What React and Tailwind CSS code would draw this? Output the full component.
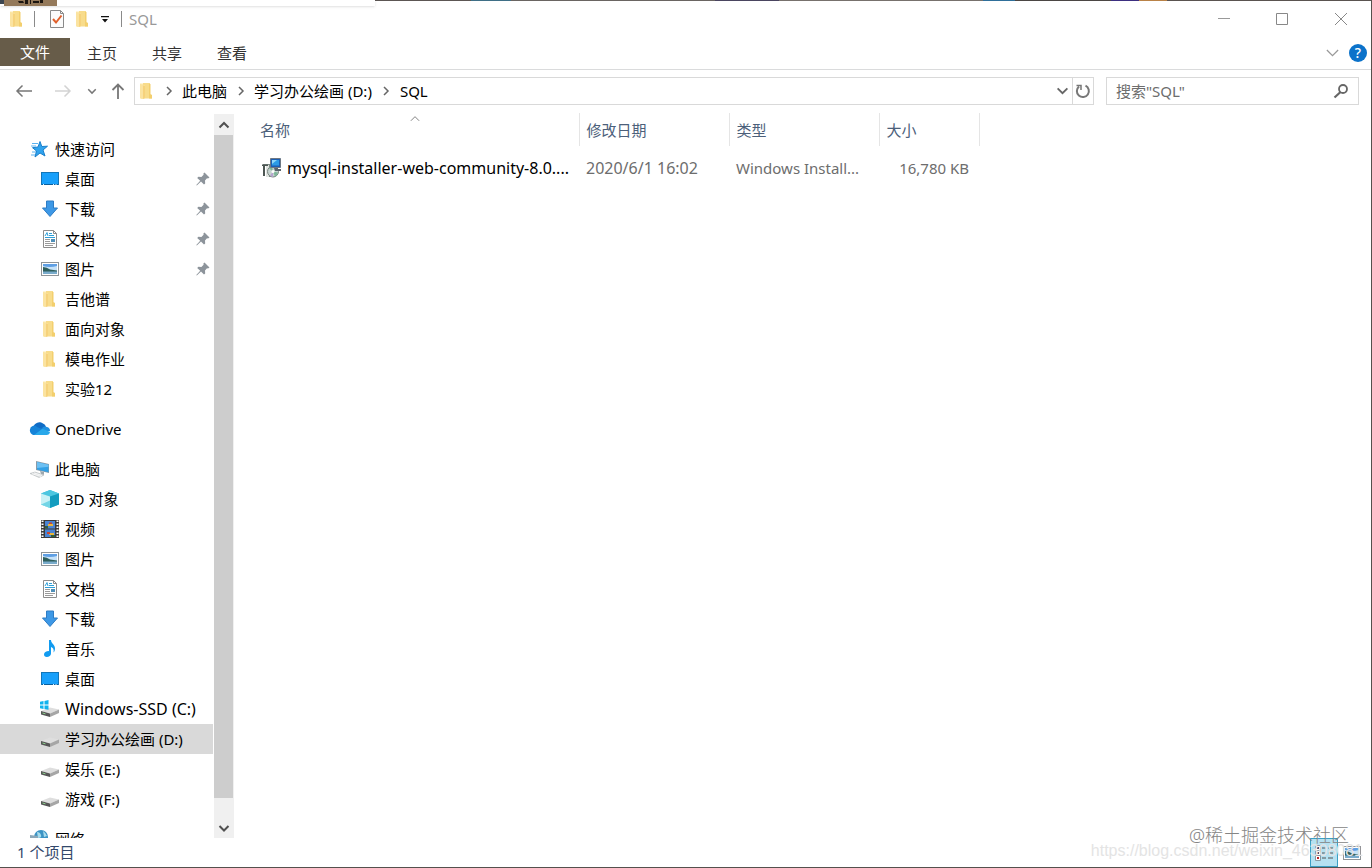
import React from "react";

function FolderIcon() {
  return (
    <svg width="20" height="20" viewBox="0 0 20 20" aria-hidden="true">
      <path d="M3 2.500h4l1 1v14l-4 .5-1-1z" fill="#fdeab0" />
      <path d="M6 2h7v11l2 1v3.500H6z" fill="#f8dc8b" />
      <path d="M12 3h1.500v10.500L15 14v3.500h-3z" fill="#f3cf6e" />
      <path d="m3 3 5 1.500v12L6 18l-3-1z" fill="#fbe3a0" />
      <path d="M8 5v11.500L6 18V4.400z" fill="#f6d27c" />
    </svg>
  );
}

function DesktopIcon() {
  return (
    <svg width="20" height="20" viewBox="0 0 20 20" aria-hidden="true">
      <rect x="1.500" y="3.500" width="17" height="12" fill="#18a0fb" stroke="#1376b8" />
      <path d="M2 15.500h16" stroke="#0b5f9c" />
      <path d="M3 15.500h1M13 15.500h1M15.500 15.500h1" stroke="#d7efff" />
    </svg>
  );
}

function DownloadIcon() {
  return (
    <svg width="20" height="20" viewBox="0 0 20 20" aria-hidden="true">
      <path d="M6.500 2h7v7h4L10 17.500 2.500 9h4z" fill="#3d98e6" stroke="#2f7cc4" />
    </svg>
  );
}

function DocumentIcon() {
  return (
    <svg width="20" height="20" viewBox="0 0 20 20" aria-hidden="true">
      <path d="M3.500 1.500h10l3 3v14h-13z" fill="#fff" stroke="#8c8c8c" />
      <path d="M13.500 1.500v3h3" fill="none" stroke="#8c8c8c" />
      <path d="m5 7 2-3.500L8 7M9 4.500h3M9 6.500h5M5 8.500h10" stroke="#2e9fd8" fill="none" />
      <path d="M5 10.500h5M5 12.500h5M5 14.500h10M5 16.500h8" stroke="#9a9a9a" />
      <path d="M11 10h4v3h-4z" fill="#4f8fb8" />
    </svg>
  );
}

function PictureIcon() {
  return (
    <svg width="20" height="20" viewBox="0 0 20 20" aria-hidden="true">
      <rect x="1.500" y="3.500" width="17" height="13" fill="#fff" stroke="#8f9498" />
      <path d="M3 5h14v10H3z" fill="#c6e2f8" />
      <path d="M3 5h14v2q-7 2-14 0z" fill="#5f9fe4" />
      <path d="M3 8q4 0 7 2.500l7 1V13H3z" fill="#2f5f5c" />
      <path d="M3 12.500h14V15H3z" fill="#7aaccc" />
    </svg>
  );
}

function StarIcon() {
  return (
    <svg width="20" height="20" viewBox="0 0 20 20" aria-hidden="true">
      <path
        d="m11 2.500 1.800 5 5.700-.3-4.500 3.800 2 6-5-3-5 4 1.500-6-4-3.300 5.500-.7z"
        fill="#2fa3ee"
        stroke="#1a7fcb"
      />
      <path d="M3 4.500h6M2 7h5M3 13h4M2 16h4" stroke="#5bb2f0" />
    </svg>
  );
}

function CloudIcon() {
  return (
    <svg width="22" height="20" viewBox="0 0 22 20" aria-hidden="true">
      <path d="M5 16a4.500 4.500 0 0 1-.5-8A6 6 0 0 1 14 4.500 5 5 0 0 1 17 8l-3 6z" fill="#0f6cc6" />
      <path d="M13.500 8.500a4.500 4.500 0 0 1 4.500-.5 4 4 0 0 1 3 4l-8 1z" fill="#1f90e0" />
      <path d="m4 15.500 9-6 8 3.500a3.500 3.500 0 0 1-3.500 3H5z" fill="#28a8ea" />
      <path d="M1 10.500A4 4 0 0 1 8 8l5 2-8 6a4.500 4.500 0 0 1-4-5.500z" fill="#1683d8" />
    </svg>
  );
}

function ComputerIcon() {
  return (
    <svg width="22" height="20" viewBox="0 0 22 20" aria-hidden="true">
      <path d="m7 2 13 3v9L7 11z" fill="#8a9aa6" />
      <path d="m8 3 11.500 2.700v7.500L8 10.500z" fill="#33a1e6" />
      <path d="m8 3 11.500 2.700v2L8 9z" fill="#6cc0f3" />
      <path d="m11 12 4 1v3l-3-1z" fill="#9ca7ae" />
      <path d="m1 14.500 5-1.500 9 3-5 2.500z" fill="#d9dcde" stroke="#b3b8bb" strokeWidth=".6" />
      <path d="m3 14.700 9 2.700M5 13.900l8 2.600" stroke="#f7f7f7" />
    </svg>
  );
}

function CubeIcon() {
  return (
    <svg width="20" height="20" viewBox="0 0 20 20" aria-hidden="true">
      <path d="m10 1 9 3.500v11L10 19l-9-3.500v-11z" fill="#35bcd8" />
      <path d="m10 1 9 3.500-9 3-9-3z" fill="#4cc6e0" />
      <path d="m1 4.500 9 3V19l-9-3.500z" fill="#c8f1f6" />
      <path d="m10 7.500 9-3v11L10 19z" fill="#139cbf" />
      <path d="m1 15.500 9-4V19z" fill="#72d5e6" />
    </svg>
  );
}

function VideoIcon() {
  return (
    <svg width="20" height="20" viewBox="0 0 20 20" aria-hidden="true">
      <path d="M1 1h18v18H1z" fill="#3a3a3a" />
      <path d="M2.500 1.500v17M17.500 1.500v17" stroke="#fff" strokeWidth="2" strokeDasharray="1.500 1.500" />
      <path d="M5 2h10v7.500H5zM5 10.500h10V18H5z" fill="#4a84d4" />
      <path d="M8 5h5v2H8zM9 14h5v2H9z" fill="#e9b53a" />
      <path d="M9 3.500h3V5H9zM7 13h3v2H7z" fill="#c8452f" />
      <path d="M5 7h3v2.500H5zM11 16h4v2h-4z" fill="#2f5d3c" />
    </svg>
  );
}

function MusicIcon() {
  return (
    <svg width="20" height="20" viewBox="0 0 20 20" aria-hidden="true">
      <path
        d="M9 1h2c0 3.500 4 4.500 4 8.500 0 1.500-.5 3-1.500 4 .8-3-.5-5-2.500-5.500v6.500c0 2-2 3.500-4.200 3.500C5 18 4 17 4 15.500 4 13.500 6 12 9 12z"
        fill="#119bf0"
      />
    </svg>
  );
}

function DriveIcon({ system }) {
  return (
    <svg width="20" height="20" viewBox="0 0 20 20" aria-hidden="true">
      <path d="m1 12 9-3.500 9 2-9 4z" fill="#dedede" />
      <path d="m1 12 9 2.500V18l-9-2.500z" fill="#555" />
      <path d="m10 14.500 9-4v3.500l-9 4z" fill="#a6a6a6" />
      <path d="m2.500 14 3 .8" stroke="#8fd08f" />
      {system && (
        <path d="M0 2.700 3.500 2v3.500H0zM4.500 2 8.500 1v4.500h-4zM0 6.500h3.500V10L0 9.300zM4.500 6.500h4v4.300l-4-.8z" fill="#10b3ee" />
      )}
    </svg>
  );
}

function NetworkIcon() {
  return (
    <svg width="20" height="20" viewBox="0 0 20 20" aria-hidden="true">
      <circle cx="12" cy="8" r="7" fill="#3b93c4" />
      <path d="M8 3q3 0 4 3t-3 3zM14 2q3 2 4 5l-3 1z" fill="#a8dcec" />
      <path d="m1 6 8 1v7l-8-1z" fill="#8ba7b8" />
    </svg>
  );
}

function InstallerIcon() {
  return (
    <svg width="20" height="22" viewBox="0 0 20 22" aria-hidden="true">
      <path d="M1 7h9v13H4V9H1z" fill="#7d8a86" />
      <path d="M4 8h3v12H4z" fill="#dfe4e0" />
      <path d="M0 7.500h6V9H3v10H1V9H0z" fill="#4d5653" />
      <circle cx="11" cy="14.500" r="5.500" fill="#c5d3cf" stroke="#7b8582" />
      <path d="m11 14.500-4-3a5 5 0 0 1 3-2zM11 14.500l5 1a5 5 0 0 1-3 4z" fill="#7fb79a" />
      <path d="m11 14.500-3 4a5 5 0 0 0 3 1.500z" fill="#b7a4cf" />
      <path d="M8.500 1.500h10v9h-10z" fill="#1c5fb4" stroke="#6d7884" />
      <path d="M10 3h7v5.500h-7z" fill="#2b9be6" />
      <path d="M10 3h5l-5 4z" fill="#8fd6f8" />
      <path d="M12 11h4v1h3v2h-6z" fill="#59636b" />
      <circle cx="11" cy="14.500" r="1.500" fill="#fff" />
    </svg>
  );
}

function PinIcon() {
  return (
    <svg width="14" height="14" viewBox="0 0 14 14" aria-hidden="true">
      <path
        d="M8.500.5 13.500 5.500l-1.500 1-1-.2-2 2.200.2 3-1.200 1L5 9.500.8 13.500.3 13l3.900-4.200L1.200 6l1.200-1.200 3 .2 2.200-2.200L7.400 1.500z"
        fill="#8d949b"
      />
    </svg>
  );
}

function Chevron({ direction = "right", size = 12, color = "#666", width = 1.5 }) {
  const paths = {
    right: "M4 2 8 6 4 10",
    down: "M1.500 4 6 8.500 10.500 4",
    up: "M1.500 8.500 6 4 10.500 8.500",
  };
  return (
    <svg width={size} height={size} viewBox="0 0 12 12" fill="none" stroke={color} strokeWidth={width} aria-hidden="true">
      <path d={paths[direction]} />
    </svg>
  );
}

const quickAccess = [
  { label: "桌面", icon: DesktopIcon, pinned: true },
  { label: "下载", icon: DownloadIcon, pinned: true },
  { label: "文档", icon: DocumentIcon, pinned: true },
  { label: "图片", icon: PictureIcon, pinned: true },
  { label: "吉他谱", icon: FolderIcon },
  { label: "面向对象", icon: FolderIcon },
  { label: "模电作业", icon: FolderIcon },
  { label: "实验12", icon: FolderIcon },
];

const thisPc = [
  { label: "3D 对象", icon: CubeIcon },
  { label: "视频", icon: VideoIcon },
  { label: "图片", icon: PictureIcon },
  { label: "文档", icon: DocumentIcon },
  { label: "下载", icon: DownloadIcon },
  { label: "音乐", icon: MusicIcon },
  { label: "桌面", icon: DesktopIcon },
  { label: "Windows-SSD (C:)", icon: DriveIcon, system: true },
  { label: "学习办公绘画 (D:)", icon: DriveIcon, selected: true },
  { label: "娱乐 (E:)", icon: DriveIcon },
  { label: "游戏 (F:)", icon: DriveIcon },
];

// pieces of the desktop that show above the window
const backdrop = [
  "w-24 bg-[#5c5653]",
  "w-10 bg-[#3f6f86]",
  "flex-1 bg-[#6a6562]",
  "w-16 bg-[#4a4560]",
  "flex-1 bg-[#77716d]",
  "w-8 bg-[#2f6f9a]",
  "w-24 bg-[#4b4644]",
  "w-7 bg-[#3d2f80]",
  "w-7 bg-[#b98247]",
  "flex-1 bg-[#5a5350]",
];

function NavItem({ item }) {
  const Icon = item.icon;
  return (
    <li>
      <a
        href="#"
        className={`flex h-[30px] items-center gap-[5px] pl-10 pr-[3px] ${item.selected ? "bg-[#d9d9d9]" : ""}`}
      >
        <Icon system={item.system} />
        <span className={`flex-1 whitespace-nowrap ${item.system ? "text-base" : ""}`}>{item.label}</span>
        {item.pinned && <PinIcon />}
      </a>
    </li>
  );
}

function NavGroup({ label, icon: Icon, items = [] }) {
  return (
    <section className="mb-[10px]">
      <a href="#" className="flex h-[30px] items-center pl-[29px]">
        <span className="flex w-[26px]">
          <Icon />
        </span>
        {label}
      </a>
      <ul>
        {items.map((item) => (
          <NavItem key={item.label} item={item} />
        ))}
      </ul>
    </section>
  );
}

function TitleBar() {
  return (
    <header className="flex h-[38px] items-center">
      <div className="flex flex-1 items-center pl-[7px]">
        <FolderIcon />
        <span className="ml-[7px] h-4 w-px bg-[#8a8a8a]" />
        <button type="button" aria-label="属性" className="ml-3">
          <svg width="20" height="20" viewBox="0 0 20 20" fill="none">
            <path d="M3.500 1.500h10l3 3v14h-13z" fill="#fbfbfb" stroke="#8a8a8a" />
            <path d="M13.500 1.500v3h3" stroke="#8a8a8a" />
            <path d="m6 10 3 3.500 5.500-7" stroke="#e0602c" strokeWidth="2" />
          </svg>
        </button>
        <button type="button" aria-label="新建文件夹" className="ml-[6px]">
          <FolderIcon />
        </button>
        <button type="button" aria-label="自定义快速访问工具栏" className="ml-[7px]">
          <svg width="10" height="10" viewBox="0 0 10 10">
            <path d="M1 2h8v1.300H1zM2 5h6L5 8.500z" fill="#111" />
          </svg>
        </button>
        <span className="ml-[11px] h-4 w-px bg-[#8a8a8a]" />
        <h1 className="ml-[7px] text-[#999]">SQL</h1>
      </div>
      <div className="flex">
        <button type="button" aria-label="最小化" className="flex w-[58px] justify-center">
          <svg width="14" height="14" viewBox="0 0 14 14" stroke="#999">
            <path d="M1 6.500h12" />
          </svg>
        </button>
        <button type="button" aria-label="最大化" className="flex w-[58px] justify-center">
          <svg width="14" height="14" viewBox="0 0 14 14" fill="none" stroke="#888">
            <path d="M1.500 1.500h11v11h-11z" />
          </svg>
        </button>
        <button type="button" aria-label="关闭" className="flex w-[60px] justify-center">
          <svg width="14" height="14" viewBox="0 0 14 14" stroke="#888">
            <path d="m1 1 12 12M13 1 1 13" />
          </svg>
        </button>
      </div>
    </header>
  );
}

function Ribbon() {
  return (
    <nav className="flex h-8 items-center border-b border-[#dadbdc] text-[#333]">
      <button type="button" className="h-[28px] w-[70px] self-start bg-[#675c49] text-white">
        文件
      </button>
      <div className="flex pb-[2px]">
        <button type="button" className="w-16">主页</button>
        <button type="button" className="w-[66px]">共享</button>
        <button type="button" className="w-16">查看</button>
      </div>
      <div className="ml-auto flex items-center gap-[9px] pb-[2px] pr-1">
        <button type="button" aria-label="展开功能区">
          <Chevron direction="down" size={15} color="#999" width={1} />
        </button>
        <button
          type="button"
          aria-label="帮助"
          className="flex size-[18px] items-center justify-center rounded-full bg-[#0b72ca] text-sm font-medium text-white"
        >
          ?
        </button>
      </div>
    </nav>
  );
}

function AddressRow() {
  return (
    <div className="flex h-[43px] items-center pb-[2px] pr-3">
      <div className="flex w-[134px] items-center pl-[15px]">
        <button type="button" aria-label="后退">
          <svg width="18" height="16" viewBox="0 0 18 16" fill="none" stroke="#777" strokeWidth="1.500">
            <path d="M17 8H2M7.500 2.500 2 8l5.500 5.500" />
          </svg>
        </button>
        <button type="button" aria-label="前进" className="ml-[21px]" disabled>
          <svg width="18" height="16" viewBox="0 0 18 16" fill="none" stroke="#d3d3d3" strokeWidth="1.500">
            <path d="M1 8h15M10.500 2.500 16 8l-5.500 5.500" />
          </svg>
        </button>
        <button type="button" aria-label="最近浏览的位置" className="ml-[15px]">
          <Chevron direction="down" size={10} color="#777" width={1.8} />
        </button>
        <button type="button" aria-label="上移" className="ml-[13px]">
          <svg width="16" height="18" viewBox="0 0 16 18" fill="none" stroke="#777" strokeWidth="1.800">
            <path d="M8 17V2.500M2.500 8 8 2.500 13.500 8" />
          </svg>
        </button>
      </div>
      <div className="flex h-7 flex-1 items-center border border-[#d9d9d9]">
        <span className="ml-[2px] mr-[6px]">
          <FolderIcon />
        </span>
        <Chevron />
        <a href="#" className="ml-[7px] mr-2">此电脑</a>
        <Chevron />
        <a href="#" className="ml-[7px] mr-2">学习办公绘画 (D:)</a>
        <Chevron />
        <a href="#" className="ml-2 mr-2">SQL</a>
        <button type="button" aria-label="以前的位置" className="ml-auto mr-[3px]">
          <Chevron direction="down" size={13} width={1.7} />
        </button>
        <button
          type="button"
          aria-label="刷新"
          className="flex h-full w-[21px] items-center justify-center border-l border-[#d9d9d9]"
        >
          <svg width="16" height="16" viewBox="0 0 16 16" fill="none" stroke="#777" strokeWidth="2">
            <path d="M10.500 2.700A6 6 0 1 1 4 3.500" />
            <path d="M1.500 2.500H6V7" strokeWidth="1.500" />
          </svg>
        </button>
      </div>
      <label className="ml-3 flex h-7 w-[253px] items-center border border-[#d9d9d9] px-[9px]">
        <input
          type="text"
          aria-label="搜索"
          placeholder={'搜索"SQL"'}
          className="min-w-0 flex-1 outline-none placeholder:text-[#6d6d6d]"
        />
        <svg width="16" height="16" viewBox="0 0 16 16" fill="none" stroke="#666" aria-hidden="true">
          <circle cx="10" cy="6" r="4" strokeWidth="1.800" />
          <path d="m7.500 9-6 5.500" strokeWidth="2.200" />
        </svg>
      </label>
    </div>
  );
}

function NavPane() {
  return (
    <aside className="flex w-[234px] shrink-0">
      <div className="min-w-0 flex-1 overflow-hidden pr-px pt-[21px]">
        <NavGroup label="快速访问" icon={StarIcon} items={quickAccess} />
        <NavGroup label="OneDrive" icon={CloudIcon} />
        <NavGroup label="此电脑" icon={ComputerIcon} items={thisPc} />
        <NavGroup label="网络" icon={NetworkIcon} />
      </div>
      <div className="mt-px flex w-5 flex-col bg-[#f0f0f0]">
        <button type="button" aria-label="向上滚动" className="flex h-[21px] items-center justify-center">
          <Chevron direction="up" color="#505050" width={2} />
        </button>
        <div className="mr-px flex-1 bg-[#cdcdcd]" />
        <button type="button" aria-label="向下滚动" className="mt-[19px] flex h-[21px] items-center justify-center">
          <Chevron direction="down" color="#505050" width={2} />
        </button>
      </div>
    </aside>
  );
}

function FileList() {
  return (
    <main className="min-w-0 flex-1 pl-[18px]">
      <table className="w-[727px] table-fixed text-left">
        <thead className="text-[#4c607a]">
          <tr className="h-[33px]">
            <th className="relative w-[327px] border-r border-[#e5e5e5] pl-2 font-normal">
              名称
              <span className="absolute left-1/2 top-0 -translate-x-1/2">
                <Chevron direction="up" size={11} color="#777" width={1} />
              </span>
            </th>
            <th className="w-[150px] border-r border-[#e5e5e5] pl-[7px] font-normal">修改日期</th>
            <th className="w-[150px] border-r border-[#e5e5e5] pl-[7px] font-normal">类型</th>
            <th className="w-[100px] border-r border-[#e5e5e5] pl-[7px] font-normal">大小</th>
          </tr>
        </thead>
        <tbody className="text-[#6d6d6d]">
          <tr className="h-[44px]">
            <td className="pl-[10px] text-base text-black">
              <div className="flex items-center gap-[5px] whitespace-nowrap">
                <InstallerIcon />
                mysql-installer-web-community-8.0....
              </div>
            </td>
            <td className="pl-[7px] text-base">2020/6/1 16:02</td>
            <td className="whitespace-nowrap pl-[7px]">Windows Install...</td>
            <td className="pr-[10px] text-right">16,780 KB</td>
          </tr>
        </tbody>
      </table>
    </main>
  );
}

function StatusBar() {
  return (
    <footer className="flex h-[29px] items-center justify-between pl-[17px] pr-[9px] text-[#33486b]">
      <span className="pb-[2px]">1 个项目</span>
      <div className="flex h-full items-center gap-1">
        <button
          type="button"
          aria-label="详细信息"
          className="flex h-full w-7 items-center justify-center border border-[#3c9fc4] bg-[#b5e1f1]"
        >
          <svg width="20" height="18" viewBox="0 0 20 18" fill="none">
            <path d="M1.500 1.500h5v5h-5zM1.500 6.500h5v5h-5zM1.500 11.500h5v5h-5z" fill="#fff" stroke="#8899a2" />
            <path d="M3 4h2M3 9h2" stroke="#446" strokeWidth="2" />
            <path d="M3 14h2" stroke="#b22" strokeWidth="2" />
            <path d="M8 4h4M14 4h5M8 9h4M14 9h5M8 14h4M14 14h5" stroke="#555" />
          </svg>
        </button>
        <button type="button" aria-label="大图标">
          <PictureIcon />
        </button>
      </div>
    </footer>
  );
}

export default function App() {
  return (
    <div className="relative flex h-screen flex-col overflow-hidden border-b border-r border-[#55504d] bg-white font-['Noto_Sans','Noto_Sans_CJK_SC',sans-serif] text-[15px] leading-5 text-black">
      <TitleBar />
      <Ribbon />
      <AddressRow />
      <div className="flex min-h-0 flex-1">
        <NavPane />
        <FileList />
      </div>
      <StatusBar />

      <div className="absolute inset-x-0 top-0 flex h-px pl-[375px]">
        {backdrop.map((piece) => (
          <span key={piece} className={piece} />
        ))}
      </div>
      <div className="absolute left-0 top-0 flex h-[6px] w-[375px] bg-white shadow">
        <span className="h-1 w-1 bg-[#3c4650]" />
        <svg width="53" height="6" viewBox="0 0 53 6" aria-hidden="true">
          <path d="M0 0h53v6H0z" fill="#94795a" />
          <path d="M14 1h5l1 2h-5zM21 0h3v4h-3zM26 0h1v4h-1zM29 1h6v2h-6zM36 0h3v3h-3z" fill="#1c1610" />
        </svg>
      </div>
      <div className="pointer-events-none absolute bottom-1 right-2 font-['Liberation_Sans',sans-serif] text-base text-[#e4e4e4]">
        https://blog.csdn.net/weixin_46308081
      </div>
      <div className="pointer-events-none absolute bottom-[18px] right-[22px] text-lg font-light text-[#858585]">
        @稀土掘金技术社区
      </div>
    </div>
  );
}
